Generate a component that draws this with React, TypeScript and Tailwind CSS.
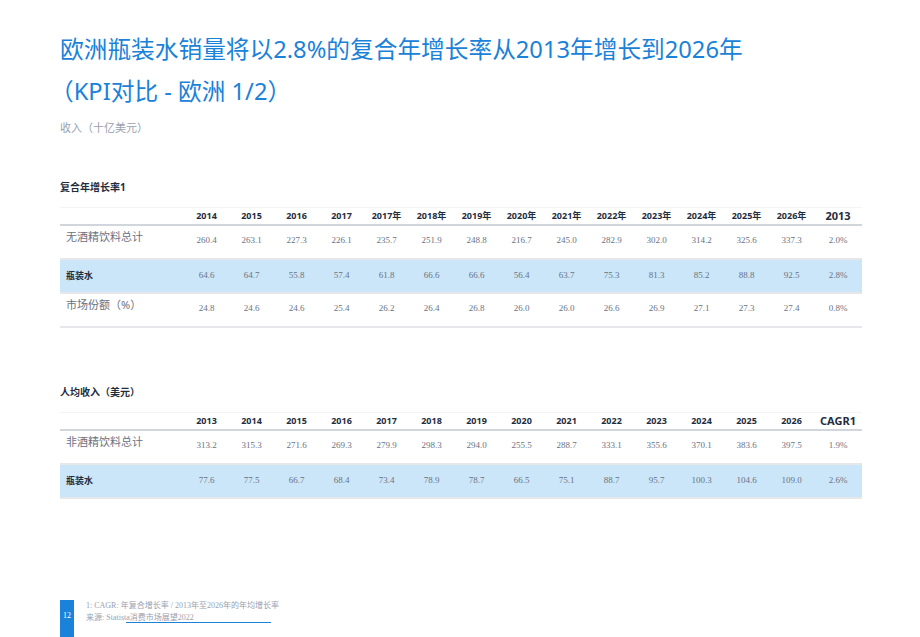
import React from "react";

const sans = { fontFamily: '"Noto Sans","Noto Sans CJK SC",sans-serif' };
const serif = { fontFamily: '"Liberation Serif","Noto Sans CJK SC",serif' };

type Row = { label: string; vals: string[]; hl?: boolean; big?: boolean };

function Table({ header, rows, lastBig, rowH }: { header: string[]; rows: Row[]; lastBig: string; rowH: number }) {
  const cols = "grid grid-cols-[124px_repeat(14,45px)_48px]";
  return (
    <div className="w-[802px]">
      <div className={`${cols} h-[19px] items-center border-t border-gray-100 border-b-2 border-b-gray-300 text-[9px] font-bold text-[#1f2d3d]`} style={sans}>
        <div />
        {header.map((h, i) => (
          <div key={i} className="text-center">{h}</div>
        ))}
        <div className="text-center text-[11px]">{lastBig}</div>
      </div>
      {rows.map((r, i) => (
        <div key={i} className={`${cols} items-end border-b-2 border-gray-200 ${r.hl ? "bg-[#cce6f9]" : ""}`} style={{ height: rowH }}>
          <div className={`self-center pl-[6px] whitespace-nowrap ${r.big ? "text-[11px] text-gray-500 -mt-[8px]" : "text-[9px] font-bold text-[#1f2d3d]"}`} style={sans}>{r.label}</div>
          {r.vals.map((v, j) => (
            <div key={j} className={`text-center text-[9px] text-gray-500 ${r.hl ? "self-center" : "pb-[10px]"}`} style={serif}>{v}</div>
          ))}
        </div>
      ))}
    </div>
  );
}

export default function App() {
  return (
    <div className="w-[920px] h-[637px] bg-white relative overflow-hidden">
      <div className="pl-[60px] pt-[28px]">
        <div className="text-[23.7px] leading-[42px] text-[#1a82d8]" style={sans}>
          <div>欧洲瓶装水销量将以2.8%的复合年增长率从2013年增长到2026年</div>
          <div className="-ml-[10px]">（KPI对比 - 欧洲 1/2）</div>
        </div>
        <div className="mt-[8px] text-[11px] text-gray-400" style={sans}>收入（十亿美元）</div>
        <div className="mt-[43px] text-[10px] font-bold text-[#1f2d3d]" style={sans}>复合年增长率1</div>
        <div className="mt-[12px]">
          <Table
            rowH={34}
            header={["2014","2015","2016","2017","2017年","2018年","2019年","2020年","2021年","2022年","2023年","2024年","2025年","2026年"]}
            lastBig="2013"
            rows={[
              { label: "无酒精饮料总计", big: true, vals: ["260.4","263.1","227.3","226.1","235.7","251.9","248.8","216.7","245.0","282.9","302.0","314.2","325.6","337.3","2.0%"] },
              { label: "瓶装水", hl: true, vals: ["64.6","64.7","55.8","57.4","61.8","66.6","66.6","56.4","63.7","75.3","81.3","85.2","88.8","92.5","2.8%"] },
              { label: "市场份额（%）", big: true, vals: ["24.8","24.6","24.6","25.4","26.2","26.4","26.8","26.0","26.0","26.6","26.9","27.1","27.3","27.4","0.8%"] },
            ]}
          />
        </div>
        <div className="mt-[57px] text-[10px] font-bold text-[#1f2d3d]" style={sans}>人均收入（美元）</div>
        <div className="mt-[12px]">
          <Table
            rowH={34}
            header={["2013","2014","2015","2016","2017","2018","2019","2020","2021","2022","2023","2024","2025","2026"]}
            lastBig="CAGR1"
            rows={[
              { label: "非酒精饮料总计", big: true, vals: ["313.2","315.3","271.6","269.3","279.9","298.3","294.0","255.5","288.7","333.1","355.6","370.1","383.6","397.5","1.9%"] },
              { label: "瓶装水", hl: true, vals: ["77.6","77.5","66.7","68.4","73.4","78.9","78.7","66.5","75.1","88.7","95.7","100.3","104.6","109.0","2.6%"] },
            ]}
          />
        </div>
      </div>
      <div className="absolute left-[60px] top-[600px] w-[14px] h-[37px] bg-[#1a82d8] text-white text-[8px] flex items-start justify-center pt-[10px]" style={serif}>12</div>
      <div className="absolute left-[86px] top-[600px] text-[8px] leading-[12px] text-gray-400" style={serif}>
        <div>1: CAGR: 年复合增长率 / 2013年至2026年的年均增长率</div>
        <div className="relative">来源: Statista消费市场展望2022
          <div className="absolute left-[40px] top-[10px] w-[145px] h-[1px] bg-[#1a82d8]" />
        </div>
      </div>
    </div>
  );
}
